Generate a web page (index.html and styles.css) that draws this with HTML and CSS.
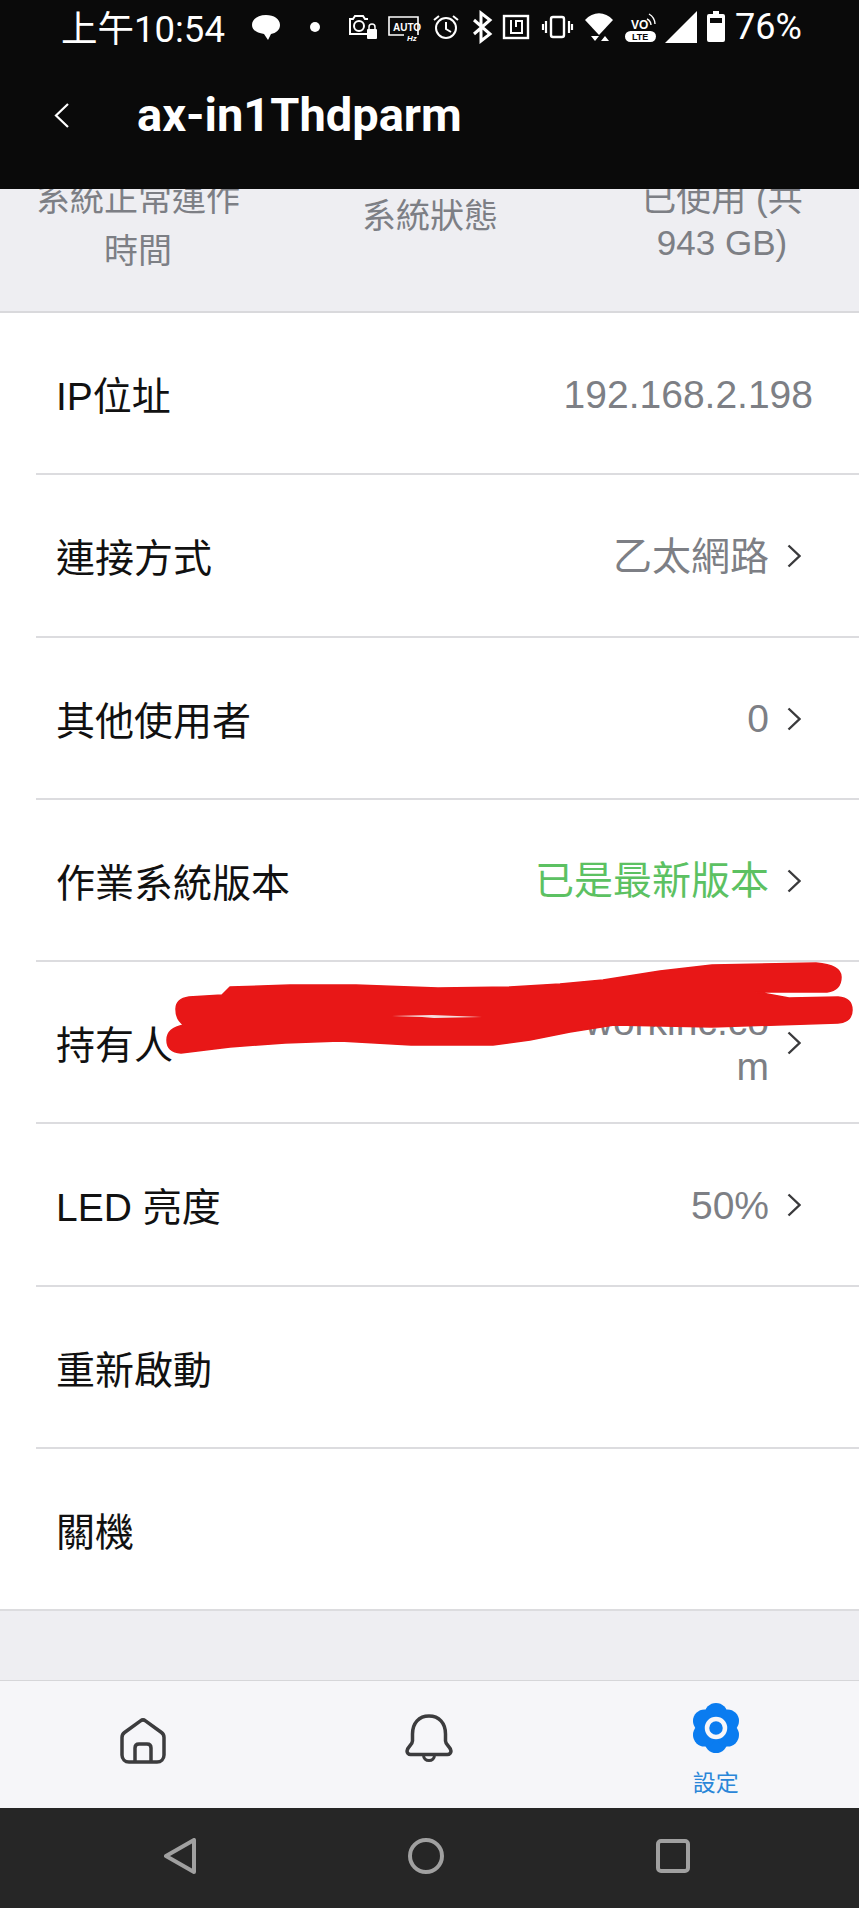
FILE: index.html
```html
<!DOCTYPE html>
<html>
<head>
    <meta charset="UTF-8">
    <meta name="viewport" content="width=device-width, initial-scale=1.0">
    <title>ax-in1Thdparm</title>
    <link rel="stylesheet" href="styles.css">
</head>
<body>
    <div class="header">
        <div class="status-bar">
            <span class="clock">上午10:54</span>
            <svg class="status-icons" width="473" height="34" viewBox="252 8 473 34">
                <!-- chat bubble -->
                <path d="M266 13c8 0 14 4 14 10 0 5-4 8-9 9l-3 6-4-6c-7-1-12-4-12-9 0-6 6-10 14-10z" fill="#fff"/>
                <circle cx="315" cy="25" r="5" fill="#fff"/>
                <!-- camera with lock -->
                <path d="M368 17h-3l-2-3h-8l-2 3h-3v15h17" fill="none" stroke="#fff" stroke-width="2"/>
                <circle cx="359" cy="24" r="5" fill="none" stroke="#fff" stroke-width="2"/>
                <rect x="367" y="27" width="10" height="10" rx="1" fill="#fff"/>
                <path d="M369 27v-2a3 3 0 0 1 6 0v2" fill="none" stroke="#fff" stroke-width="1.5"/>
                <!-- auto hz -->
                <path d="M404 33h-15V15h29v18" fill="none" stroke="#fff" stroke-width="1.6"/>
                <text class="tiny" x="393" y="29" font-size="10">AUTO</text>
                <text class="tiny" x="407" y="39" font-size="8" font-style="italic">Hz</text>
                <!-- alarm -->
                <circle cx="446" cy="26" r="10" fill="none" stroke="#fff" stroke-width="2"/>
                <path d="M446 20v7l5 3" fill="none" stroke="#fff" stroke-width="2"/>
                <path d="M434 18l5-4M453 14l5 4" stroke="#fff" stroke-width="2"/>
                <!-- bluetooth -->
                <path d="M474 18l16 14-9 7V11l9 7-16 14" fill="none" stroke="#fff" stroke-width="3"/>
                <!-- nfc -->
                <rect x="504" y="14" width="24" height="22" fill="none" stroke="#fff" stroke-width="2.4"/>
                <path d="M512 19h-1v12h11V19h-6v6" fill="none" stroke="#fff" stroke-width="2"/>
                <!-- vibrate -->
                <rect x="551" y="15" width="13" height="20" rx="2" fill="none" stroke="#fff" stroke-width="2.4"/>
                <path d="M546 19v12M569 19v12M543 22v6M572 22v6" stroke="#fff" stroke-width="2.2"/>
                <!-- wifi -->
                <path d="M585 18c8-9 20-9 28 0l-14 15z" fill="#fff"/>
                <path d="M591 34h8l-4 5zM605 34l4 5h-8z" fill="#fff"/>
                <!-- volte -->
                <text class="tiny" x="631" y="27" font-size="12">VO</text>
                <path d="M647 17a7 7 0 0 1 4 6M649 12a12 12 0 0 1 6 10" fill="none" stroke="#fff" stroke-width="1.4"/>
                <rect x="625" y="29" width="31" height="11" rx="5.5" fill="#fff"/>
                <text class="tiny tiny-dark" x="632" y="38" font-size="9">LTE</text>
                <!-- signal -->
                <path d="M697 9v32h-32z" fill="#fff"/>
                <!-- battery -->
                <path d="M713 9h6v3h4a2 2 0 0 1 2 2v24a2 2 0 0 1-2 2h-14a2 2 0 0 1-2-2V14a2 2 0 0 1 2-2h4z" fill="#fff"/>
                <rect x="710" y="16" width="12" height="5" fill="#0a0a0a"/>
            </svg>
            <span class="battery-text">76%</span>
        </div>
        <div class="title-bar">
            <svg class="back-icon" width="16" height="27" viewBox="0 0 16 27">
                <path d="M14 2L2 13.5 14 25" fill="none" stroke="#fff" stroke-width="2.2"/>
            </svg>
            <h1 class="title">ax-in1Thdparm</h1>
        </div>
    </div>

    <div class="stats">
        <div class="stat">系統正常運作時間</div>
        <div class="stat stat-single">系統狀態</div>
        <div class="stat stat-latin">已使用 (共 943 GB)</div>
    </div>

    <div class="list">
        <div class="row row-plain">
            <span class="label">IP位址</span>
            <span class="value">192.168.2.198</span>
        </div>
        <div class="row">
            <span class="label">連接方式</span>
            <span class="value">乙太網路</span>
            <svg class="chevron" width="14" height="24" viewBox="0 0 14 24"><path d="M1.500 1.500L12.500 12 1.500 22.500" fill="none" stroke="#3a3a3c" stroke-width="2.4"/></svg>
        </div>
        <div class="row">
            <span class="label">其他使用者</span>
            <span class="value">0</span>
            <svg class="chevron" width="14" height="24" viewBox="0 0 14 24"><path d="M1.500 1.500L12.500 12 1.500 22.500" fill="none" stroke="#3a3a3c" stroke-width="2.4"/></svg>
        </div>
        <div class="row">
            <span class="label">作業系統版本</span>
            <span class="value value-ok">已是最新版本</span>
            <svg class="chevron" width="14" height="24" viewBox="0 0 14 24"><path d="M1.500 1.500L12.500 12 1.500 22.500" fill="none" stroke="#3a3a3c" stroke-width="2.4"/></svg>
        </div>
        <div class="row">
            <span class="label">持有人</span>
            <span class="value value-owner">workinc.co<br>m</span>
            <svg class="chevron" width="14" height="24" viewBox="0 0 14 24"><path d="M1.500 1.500L12.500 12 1.500 22.500" fill="none" stroke="#3a3a3c" stroke-width="2.4"/></svg>
        </div>
        <div class="row">
            <span class="label">LED 亮度</span>
            <span class="value">50%</span>
            <svg class="chevron" width="14" height="24" viewBox="0 0 14 24"><path d="M1.500 1.500L12.500 12 1.500 22.500" fill="none" stroke="#3a3a3c" stroke-width="2.4"/></svg>
        </div>
        <div class="row">
            <span class="label">重新啟動</span>
        </div>
        <div class="row row-last">
            <span class="label">關機</span>
        </div>
    </div>

    <div class="spacer"></div>

    <div class="tabs">
        <div class="tab">
            <svg width="46" height="46" viewBox="0 0 46 46">
                <path d="M20.500 2.800L4.500 14.500C2.800 15.800 2 17.300 2 19.500V37c0 4 3 7 7 7h28c4 0 7-3 7-7V19.500c0-2.200-.8-3.700-2.500-5L25.500 2.800c-1.500-1.100-3.500-1.100-5 0z" fill="none" stroke="#3c3c3e" stroke-width="3.500"/>
                <path d="M15 44V30c0-2.500 1.500-4 4-4h8c2.500 0 4 1.500 4 4v14" fill="none" stroke="#3c3c3e" stroke-width="3.500"/>
            </svg>
        </div>
        <div class="tab tab-bell">
            <svg width="48" height="48" viewBox="0 0 48 48">
                <path d="M24 2C14 2 7.500 9 7.500 20v7c0 4-5.500 6-5.500 10 0 2 1.500 3.500 3.500 3.500h37c2 0 3.500-1.500 3.500-3.500 0-4-5.500-6-5.500-10v-7C40.500 9 34 2 24 2z" fill="none" stroke="#3c3c3e" stroke-width="3.500"/>
                <path d="M18.500 41c0 3.500 2.500 5.500 5.500 5.500s5.500-2 5.500-5.500" fill="none" stroke="#3c3c3e" stroke-width="3"/>
            </svg>
        </div>
        <div class="tab tab-active">
            <svg width="50" height="50" viewBox="0 0 50 50">
                <g fill="#0a7cf0">
                    <circle cx="25" cy="25" r="18"/>
                    <circle cx="25" cy="11.500" r="11.500"/>
                    <circle cx="25" cy="38.500" r="11.500"/>
                    <circle cx="13.500" cy="18" r="11.500"/>
                    <circle cx="36.500" cy="18" r="11.500"/>
                    <circle cx="13.500" cy="32" r="11.500"/>
                    <circle cx="36.500" cy="32" r="11.500"/>
                </g>
                <circle cx="25" cy="25" r="9" fill="none" stroke="#f6f6f9" stroke-width="4.500"/>
            </svg>
            <span class="tab-text">設定</span>
        </div>
    </div>

    <div class="nav-bar">
        <svg width="32" height="36" viewBox="0 0 32 36"><path d="M30 2v32L2 18z" fill="none" stroke="#a0a0a0" stroke-width="4" stroke-linejoin="round"/></svg>
        <svg width="36" height="36" viewBox="0 0 36 36"><circle cx="18" cy="18" r="16" fill="none" stroke="#a0a0a0" stroke-width="4"/></svg>
        <svg width="34" height="34" viewBox="0 0 34 34"><rect x="2" y="2" width="30" height="30" rx="3" fill="none" stroke="#a0a0a0" stroke-width="4"/></svg>
    </div>

    <!-- red marker over the owner's address -->
    <svg class="scribble" width="859" height="110" viewBox="0 955 859 110">
        <path d="M176 1009Q176 999 189 997L222 995 230 987 290 985 356 985 438 988 510 987 560 984 603 980 660 971 712 965 816 963Q841 965 841 977 841 990 827 992L756 992 789 998 838 997Q852 998 852 1010 852 1022 838 1023L712 1027 614 1025 570 1032 530 1040 493 1045 411 1045 340 1041 285 1043 230 1047 181 1053Q167 1052 167 1040 167 1028 184 1025 176 1020 176 1009z" fill="#e81717" stroke="#e81717" stroke-width="1.500" stroke-linejoin="round"/>
        <path d="M392 1016l40-1 50 2-48 1-12-1z" fill="#f4dede"/>
    </svg>
</body>
</html>
```

FILE: styles.css
```css
body {
    margin: 0;
    width: 859px;
    height: 1908px;
    overflow: hidden;
    position: relative;
    font-family: "Liberation Sans", "Noto Sans CJK TC", sans-serif;
    background-color: #eeeef2;
}

.header {
    height: 189px;
    background-color: #0a0a0a;
    color: #fff;
    position: relative;
    z-index: 1;
    font-family: Roboto, "Noto Sans CJK TC", sans-serif;
}

.status-bar {
    height: 52px;
    display: flex;
    align-items: center;
    padding-left: 61px;
}

.clock {
    width: 191px;
    font-size: 36.5px;
    white-space: nowrap;
}

.status-icons {
    display: block;
    margin-top: 2px;
}

.tiny {
    font-family: "Liberation Sans", sans-serif;
    font-weight: bold;
    fill: #fff;
}

.tiny-dark {
    fill: #0a0a0a;
}

.battery-text {
    font-size: 36px;
    margin: 2px 0 0 10px;
}

.title-bar {
    display: flex;
    align-items: center;
    padding: 33px 0 0 54px;
}

.title {
    margin: 0 0 0 67px;
    font-size: 47px;
    font-weight: 700;
    line-height: 60px;
}

.stats {
    height: 122px;
    overflow: hidden;
    display: flex;
    gap: 82px;
    padding: 0 33px;
    border-bottom: 2px solid #d9d9dc;
    color: #7d7f85;
    font-size: 34px;
    line-height: 52px;
    text-align: center;
}

.stat {
    flex: 0 0 210px;
    margin-top: -16px;
}

.stat-single {
    margin-top: 1px;
}

.stat-latin {
    margin-top: -12px;
    font-size: 35px;
    line-height: 44px;
}

.list {
    background-color: #fff;
}

.row {
    height: 160.25px;
    margin-left: 36px;
    padding: 0 58px 0 20px;
    border-bottom: 2px solid #dcdcdf;
    display: flex;
    align-items: center;
}

.row-plain {
    padding-right: 46px;
}

.row-last {
    margin-left: 0;
    padding-left: 56px;
}

.label {
    flex: 1;
    font-size: 39px;
    color: #111;
}

.value {
    font-size: 39px;
    color: #7d7f85;
    text-align: right;
    line-height: 45px;
    margin-top: 2px;
}

.value-ok {
    color: #5cc162;
}

.value-owner {
    margin-top: 4px;
}

.chevron {
    margin: 2px 0 0 18px;
    flex: none;
}

.spacer {
    height: 69px;
}

.tabs {
    height: 127px;
    border-top: 1px solid #d6d6d9;
    background-color: #f6f6f9;
    display: flex;
}

.tab {
    flex: 1;
    display: flex;
    flex-direction: column;
    align-items: center;
    padding-top: 37px;
}

.tab-bell {
    padding-top: 33px;
}

.tab-active {
    padding-top: 22px;
}

.tab-text {
    font-size: 23px;
    line-height: 30px;
    margin-top: 15px;
    color: #2a86d8;
}

.nav-bar {
    height: 96px;
    background-color: #262626;
    display: flex;
    align-items: center;
    gap: 212px;
    padding-left: 164px;
    padding-bottom: 4px;
}

.scribble {
    position: absolute;
    left: 0;
    top: 955px;
}
```
